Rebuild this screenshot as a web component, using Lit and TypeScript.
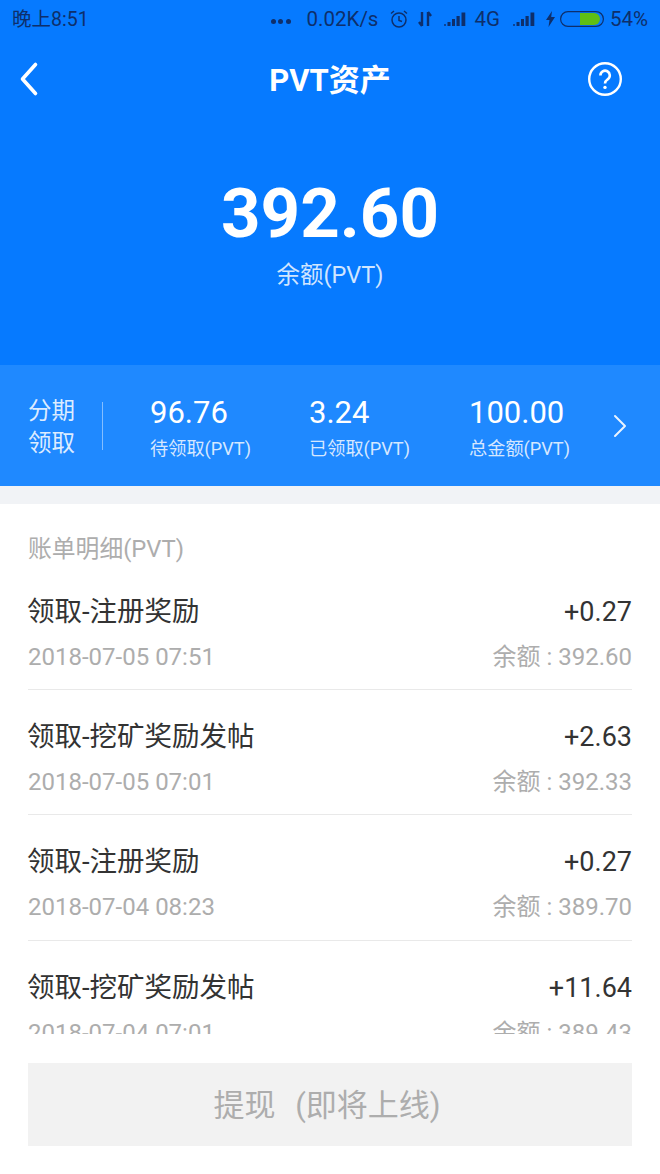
import { LitElement, html, css, svg } from "lit";
import { customElement } from "lit/decorators.js";

const rows = [
  { t: "领取-注册奖励", a: "+0.27", d: "2018-07-05 07:51", b: "392.60" },
  { t: "领取-挖矿奖励发帖", a: "+2.63", d: "2018-07-05 07:01", b: "392.33" },
  { t: "领取-注册奖励", a: "+0.27", d: "2018-07-04 08:23", b: "389.70" },
  { t: "领取-挖矿奖励发帖", a: "+11.64", d: "2018-07-04 07:01", b: "389.43" },
];

const stats = [
  { v: "96.76", l: "待领取(PVT)" },
  { v: "3.24", l: "已领取(PVT)" },
  { v: "100.00", l: "总金额(PVT)" },
];

const signal = svg`<svg width="22" height="16" viewBox="0 0 22 16">
  <g fill="#0e2f6b">
    <rect x="0" y="13" width="2" height="2" opacity=".7"/>
    <rect x="3.500" y="11" width="3" height="4"/>
    <rect x="8" y="8" width="3" height="7"/>
    <rect x="12.500" y="5" width="3.200" height="10"/>
    <rect x="17.500" y="1.500" width="3.800" height="13.500"/>
  </g></svg>`;

@customElement("app-root")
export class AppRoot extends LitElement {
  static styles = css`
    :host { display: block; width: 660px; height: 1174px; background: #fff; font-family: "Roboto", "Noto Sans CJK SC", sans-serif; overflow: hidden; }
    .hero { background: #067aff; height: 365px; display: flex; flex-direction: column; }
    .status { height: 38px; display: flex; align-items: center; padding: 0 12px; color: #0e2f6b; }
    .time { flex: 1; font-size: 19.5px; margin-bottom: 4px; }
    .right { display: flex; align-items: center; font-size: 20.5px; }
    .dots { display: flex; gap: 2.5px; margin-right: 16px; margin-top: 4px; }
    .dots i { width: 5px; height: 5px; border-radius: 50%; background: #0e2f6b; }
    .ic { display: flex; }
    .alarm { margin-left: 11px; }
    .arrows { margin-left: 8px; }
    .sig1 { margin-left: 11px; }
    .g4 { margin-left: 8px; }
    .sig2 { margin-left: 13px; }
    .bolt { margin-left: 11px; }
    .batt { margin-left: 5px; }
    .pct { margin-left: 6px; }
    .nav { height: 80px; display: grid; grid-template-columns: 1fr auto 1fr; align-items: center; padding: 0 38px; margin-top: 1px; }
    .back { margin-left: -19px; }
    .help { justify-self: end; }
    .title { color: #fff; font-size: 31px; font-weight: 700; padding-bottom: 4px; }
    .total { text-align: center; color: #fff; font-size: 69px; font-weight: 700; line-height: 80px; margin-top: 55px; }
    .sub { text-align: center; color: rgba(255,255,255,.82); font-size: 23.5px; line-height: 30px; margin-top: 6px; }
    .band { background: #1f89ff; height: 121px; display: flex; align-items: center; padding-left: 28px; box-sizing: border-box; }
    .fen { color: rgba(255,255,255,.85); font-size: 23.5px; line-height: 32px; width: 47px; white-space: nowrap; margin-top: 2px; }
    .sep { width: 1px; height: 48px; background: rgba(255,255,255,.45); margin: 0 47px 0 27px; }
    .stats { display: grid; grid-template-columns: 159px 160px 144px; margin-top: 6px; }
    .v { color: #fff; font-size: 31px; line-height: 36px; }
    .l { color: rgba(255,255,255,.82); font-size: 18.2px; line-height: 28px; margin-top: 4px; }
    .gap { height: 18px; background: #f1f3f6; }
    .list { height: 530px; overflow: hidden; padding: 0 28px; box-sizing: border-box; }
    .head { color: #adadad; font-size: 23.8px; line-height: 29.5px; padding-top: 31px; }
    .row { height: 125.4px; box-sizing: border-box; padding-top: 28px; border-bottom: 1px solid #e9e9e9; }
    .line { display: flex; justify-content: space-between; align-items: center; }
    .t { color: #333; font-size: 27.5px; line-height: 38px; margin-left: -1px; }
    .a { color: #333; font-size: 27px; line-height: 38px; }
    .d { color: #adadad; font-size: 24px; line-height: 32px; margin-top: 10px; }
    .btn-wrap { padding: 29px 28px 0; }
    .btn { height: 83px; box-sizing: border-box; padding: 0 6px 4px 0; background: #f2f2f2; color: #adadad; font-size: 31px; display: flex; align-items: center; justify-content: center; word-spacing: 12px; }
    .row:last-child { border-bottom: none; }
  `;

  render() {
    return html`
      <div class="hero">
        <div class="status">
          <span class="time">晚上8:51</span>
          <span class="right">
            <span class="dots"><i></i><i></i><i></i></span>
            <span>0.02K/s</span>
            <svg class="ic alarm" width="20" height="20" viewBox="0 0 20 20" fill="none" stroke="#0e2f6b" stroke-width="1.5">
              <circle cx="10" cy="11" r="7"/><path d="M10 7v4.500l3 1M2 4.500 5 2M18 4.500 15 2"/>
            </svg>
            <svg class="ic arrows" width="16" height="18" viewBox="0 0 16 18" fill="none" stroke="#0e2f6b" stroke-width="2.4">
              <path d="M5 2v14M2 12l3 4M11 16V2M11 2l3 4"/>
            </svg>
            <span class="ic sig1">${signal}</span>
            <span class="g4">4G</span>
            <span class="ic sig2">${signal}</span>
            <svg class="ic bolt" width="9" height="16" viewBox="0 0 9 16"><path d="M6 0 0 9h3.500L2.500 16 9 6H5.200z" fill="#0e2f6b"/></svg>
            <svg class="ic batt" width="44" height="16" viewBox="0 0 44 16">
              <rect x=".6" y=".6" width="42.800" height="14.800" rx="7.400" fill="none" stroke="#0e2f6b" stroke-width="1.200"/>
              <path d="M20 2h14a6 6 0 0 1 0 12H20z" fill="#5fbf14"/>
            </svg>
            <span class="pct">54%</span>
          </span>
        </div>
        <div class="nav">
          <svg class="back" width="24" height="36" viewBox="0 0 24 36" fill="none" stroke="#fff" stroke-width="3.6" stroke-linecap="round" stroke-linejoin="round">
            <path d="M16.500 3.500 3.500 18l13 14.500"/>
          </svg>
          <span class="title">PVT资产</span>
          <svg class="help" width="34" height="34" viewBox="0 0 34 34" fill="none" stroke="#fff" stroke-width="2.4">
            <circle cx="17" cy="17" r="15.800"/>
            <path d="M12.400 13.400a4.700 4.700 0 1 1 7.300 3.900c-1.700 1.200-2.700 2-2.700 4.200" stroke-width="2.6"/>
            <circle cx="17" cy="25.400" r="1.700" fill="#fff" stroke="none"/>
          </svg>
        </div>
        <div class="total">392.60</div>
        <div class="sub">余额(PVT)</div>
      </div>
      <div class="band">
        <div class="fen">分期<br />领取</div>
        <div class="sep"></div>
        <div class="stats">
          ${stats.map((s) => html`<div><div class="v">${s.v}</div><div class="l">${s.l}</div></div>`)}
        </div>
        <svg width="14" height="24" viewBox="0 0 14 24" fill="none" stroke="rgba(255,255,255,.9)" stroke-width="2" stroke-linecap="round" stroke-linejoin="round">
          <path d="M2 2l10 10L2 22"/>
        </svg>
      </div>
      <div class="gap"></div>
      <div class="list">
        <div class="head">账单明细(PVT)</div>
        ${rows.map(
          (r) => html`<div class="row">
            <div class="line"><span class="t">${r.t}</span><span class="a">${r.a}</span></div>
            <div class="line d"><span>${r.d}</span><span>余额 : ${r.b}</span></div>
          </div>`
        )}
      </div>
      <div class="btn-wrap"><div class="btn">提现 (即将上线)</div></div>
    `;
  }
}
